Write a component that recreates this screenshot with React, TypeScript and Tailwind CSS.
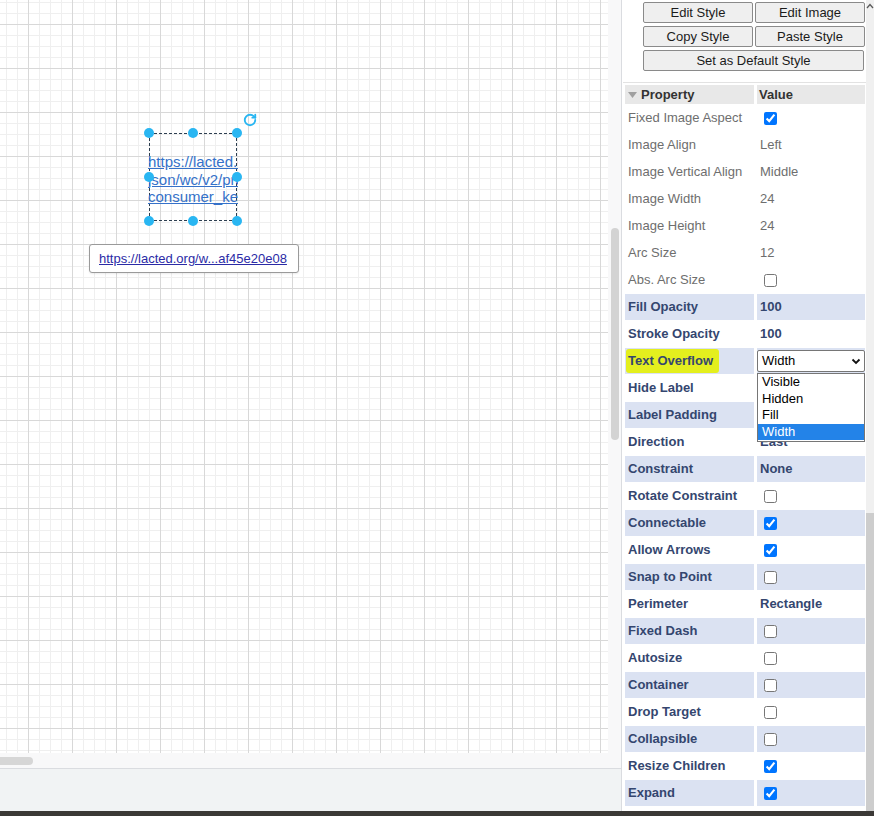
import { RotateCw } from 'lucide-react'

type Prop = {
  label: string
  value?: string
  check?: boolean
  bold?: boolean
  select?: boolean
}

const properties: Prop[] = [
  { label: 'Fixed Image Aspect', check: true },
  { label: 'Image Align', value: 'Left' },
  { label: 'Image Vertical Align', value: 'Middle' },
  { label: 'Image Width', value: '24' },
  { label: 'Image Height', value: '24' },
  { label: 'Arc Size', value: '12' },
  { label: 'Abs. Arc Size', check: false },
  { label: 'Fill Opacity', value: '100', bold: true },
  { label: 'Stroke Opacity', value: '100', bold: true },
  { label: 'Text Overflow', select: true, bold: true },
  { label: 'Hide Label', check: false, bold: true },
  { label: 'Label Padding', value: '0', bold: true },
  { label: 'Direction', value: 'East', bold: true },
  { label: 'Constraint', value: 'None', bold: true },
  { label: 'Rotate Constraint', check: false, bold: true },
  { label: 'Connectable', check: true, bold: true },
  { label: 'Allow Arrows', check: true, bold: true },
  { label: 'Snap to Point', check: false, bold: true },
  { label: 'Perimeter', value: 'Rectangle', bold: true },
  { label: 'Fixed Dash', check: false, bold: true },
  { label: 'Autosize', check: false, bold: true },
  { label: 'Container', check: false, bold: true },
  { label: 'Drop Target', check: false, bold: true },
  { label: 'Collapsible', check: false, bold: true },
  { label: 'Resize Children', check: true, bold: true },
  { label: 'Expand', check: true, bold: true },
]

const handles = [
  [149, 133],
  [193, 133],
  [237, 133],
  [149, 177],
  [237, 177],
  [149, 221],
  [193, 221],
  [237, 221],
]

function PanelButton({ label, wide }: { label: string; wide?: boolean }) {
  return (
    <button
      type="button"
      className={`h-[21px] rounded-[2px] border border-[#8a8a8a] bg-[#efefef] text-[13px] leading-[19px] text-[#1b1b1b] ${
        wide ? 'w-[221px]' : 'w-[110px]'
      }`}
    >
      {label}
    </button>
  )
}

function PropRow({ prop, index }: { prop: Prop; index: number }) {
  const shaded = prop.bold && index % 2 === 1
  const bg = shaded ? 'bg-[#dbe2f2]' : 'bg-white'
  const text = prop.bold ? 'font-bold text-[#34466f]' : 'text-[#6e6e6e]'

  return (
    <>
      <div className={`flex h-[26px] items-center pl-[3px] ${bg} ${text}`}>
        {prop.select ? (
          <span className="-ml-[2px] rounded-[3px] bg-[#e4ef1e] py-[2px] pl-[2px] pr-[6px]">
            {prop.label}
          </span>
        ) : (
          prop.label
        )}
      </div>
      <div className={`relative flex h-[26px] items-center pl-[3px] ${bg} ${text}`}>
        {prop.check !== undefined && (
          <input
            type="checkbox"
            readOnly
            checked={prop.check}
            className="m-0 ml-[4px] h-[13px] w-[13px]"
          />
        )}
        {prop.value}
        {prop.select && (
          <>
            <div className="-ml-[3px] flex h-[22px] w-[108px] items-center justify-between rounded-[2px] border border-[#767676] bg-white pl-[4px] pr-[3px] font-normal text-black">
              <span>Width</span>
              <svg width="10" height="10" viewBox="0 0 10 10">
                <path d="M1.5 3.5 L5 7 L8.5 3.5" fill="none" stroke="#111" strokeWidth="1.8" />
              </svg>
            </div>
            <div className="absolute left-0 top-[25px] z-10 flex w-[108px] flex-col border border-[#767676] bg-white pb-px font-normal leading-[16.5px] text-black">
              <span className="pl-[4px]">Visible</span>
              <span className="pl-[4px]">Hidden</span>
              <span className="pl-[4px]">Fill</span>
              <span className="bg-[#2383e8] pl-[4px] text-white">Width</span>
            </div>
          </>
        )}
      </div>
    </>
  )
}

export default function App() {
  return (
    <div className="flex h-[816px] w-[874px] flex-col overflow-hidden bg-white font-['Liberation_Sans',Arial,sans-serif] text-[13px]">
      <div className="flex h-[811px]">
        {/* diagram area */}
        <div className="flex w-[621px] flex-col">
          <div className="flex h-[768px] flex-col bg-[#f8f8f9]">
            <div className="flex">
              <div className="relative h-[753px] w-[608px] bg-white bg-[linear-gradient(to_right,#d8d8d8_1px,transparent_1px),linear-gradient(to_bottom,#d8d8d8_1px,transparent_1px),linear-gradient(to_right,#efefef_1px,transparent_1px),linear-gradient(to_bottom,#efefef_1px,transparent_1px)] bg-[size:44px_44px,44px_44px,11px_11px,11px_11px] bg-[position:28px_24px,28px_24px,6px_2px,6px_2px]">
                <div className="absolute left-[149px] top-[133px] h-[88px] w-[88px] border border-dashed border-[#2c3e50]" />
                <div className="absolute left-[148px] top-[153px] w-[90px] overflow-hidden text-[15px] leading-[17.5px] text-[#3571c9] underline">
                  <div className="whitespace-nowrap">https://lacted.org/wp-</div>
                  <div className="whitespace-nowrap">json/wc/v2/products?</div>
                  <div className="whitespace-nowrap">consumer_key=ck_</div>
                </div>
                {handles.map(([x, y]) => (
                  <div
                    key={`${x}-${y}`}
                    className="absolute h-[10px] w-[10px] -translate-x-1/2 -translate-y-1/2 rounded-full bg-[#29b6f2]"
                    style={{ left: x, top: y }}
                  />
                ))}
                <RotateCw
                  size={14}
                  strokeWidth={3.2}
                  color="#29b6f2"
                  className="absolute left-[243px] top-[113px]"
                />
                <div className="absolute left-[89px] top-[244px] flex h-[29px] w-[210px] items-center rounded-[3px] border border-[#9a9a9a] bg-white pl-[9px] shadow-[0_1px_2px_rgba(0,0,0,0.08)]">
                  <span className="text-[13px] text-[#2b2ba6] underline">
                    https://lacted.org/w...af45e20e08
                  </span>
                </div>
              </div>
              <div className="flex-1 pl-[3px] pt-[228px]">
                <div className="h-[212px] w-[8px] rounded-full bg-[#d3d3d3]" />
              </div>
            </div>
            <div className="pt-[4px]">
              <div className="h-[8px] w-[33px] rounded-r-full bg-[#d6d6d6]" />
            </div>
          </div>
          <div className="h-[43px] border-t border-[#dadce0] bg-[#f1f3f4]" />
        </div>

        {/* format panel */}
        <div className="flex w-[253px] border-l border-[#dadce0]">
          <div className="w-[244px] text-[13px]">
            <div className="flex flex-col gap-[3px] pl-[21px] pt-[2px]">
              <div className="flex gap-[2px]">
                <PanelButton label="Edit Style" />
                <PanelButton label="Edit Image" />
              </div>
              <div className="flex gap-[2px]">
                <PanelButton label="Copy Style" />
                <PanelButton label="Paste Style" />
              </div>
              <PanelButton label="Set as Default Style" wide />
            </div>
            <div className="ml-[1px] mt-[11px] h-px w-[243px] bg-[#e2e2e2]" />
            <div className="ml-[3px] mt-[2px] grid grid-cols-[129px_108px] gap-x-[3px] gap-y-px">
              <div className="flex h-[19px] items-center bg-[#e8e8e8] pl-[3px] font-bold text-[#333]">
                <svg width="9" height="6" viewBox="0 0 9 6" className="mr-[4px]">
                  <path d="M0 0 H9 L4.5 6 Z" fill="#a0a0a0" />
                </svg>
                Property
              </div>
              <div className="flex h-[19px] items-center bg-[#e8e8e8] pl-[2px] font-bold text-[#333]">
                Value
              </div>
              {properties.map((p, i) => (
                <PropRow key={p.label} prop={p} index={i} />
              ))}
            </div>
          </div>
          <div className="flex w-[8px] flex-col bg-[#f0f0f0]">
            <div className="flex h-[12px] items-start justify-center pt-[3px]">
              <svg width="8" height="6" viewBox="0 0 8 6">
                <path d="M1 5 L4 1.5 L7 5" fill="none" stroke="#5a5a5a" strokeWidth="1.3" />
              </svg>
            </div>
            <div className="mt-[501px] flex-1 bg-[#cdcdcd]" />
          </div>
        </div>
      </div>
      <div className="h-[5px] bg-[#3b3936]" />
    </div>
  )
}
